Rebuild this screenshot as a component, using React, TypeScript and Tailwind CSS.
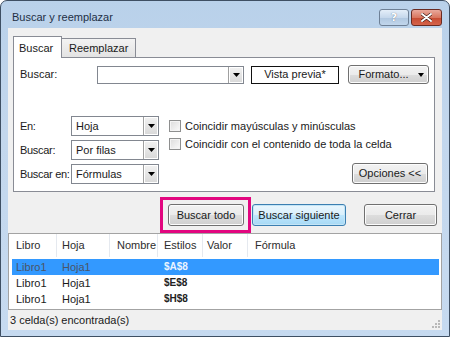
import React from "react";

const btn =
  "flex items-center justify-center rounded-[3px] border border-[#707070] bg-[linear-gradient(to_bottom,#f2f2f2_0%,#ebebeb_50%,#dddddd_51%,#cfcfcf_100%)] text-[#1a1a1a] shadow-[inset_0_0_0_1px_#fcfcfc]";

function Arrow() {
  return (
    <svg width="7" height="4" viewBox="0 0 7 4">
      <path d="M0 0h7L3.5 4z" fill="#000" />
    </svg>
  );
}

function DropBtn() {
  return (
    <div className="flex h-full w-[15px] items-center justify-center border-l border-[#a0a0a0] bg-[linear-gradient(to_bottom,#f2f2f2,#d8d8d8)] shadow-[inset_0_0_0_1px_#fff]">
      <Arrow />
    </div>
  );
}

function Select({ value }: { value: string }) {
  return (
    <div className="flex h-[20px] w-[88px] items-stretch border border-[#828790] bg-white">
      <div className="flex flex-1 items-center pl-[4px] text-[#1a1a1a]">{value}</div>
      <DropBtn />
    </div>
  );
}

function Check({ label }: { label: string }) {
  return (
    <div className="flex h-[14px] items-center">
      <div className="h-[12px] w-[12px] shrink-0 border border-[#8e8f8f] bg-[linear-gradient(135deg,#dcdcdc,#fbfbfb)] shadow-[inset_0_0_0_1px_#f4f4f4]" />
      <span className="ml-[4px] text-[#1a1a1a]">{label}</span>
    </div>
  );
}

const cols = [
  { w: "w-[48px]", pl: "pl-[7px]" },
  { w: "w-[53px]", pl: "pl-[5px]" },
  { w: "w-[48px]", pl: "pl-[7px]" },
  { w: "w-[45px]", pl: "pl-[6px]" },
  { w: "w-[45px]", pl: "pl-[4px]" },
  { w: "flex-1", pl: "pl-[7px]" },
];

const rows = [
  ["Libro1", "Hoja1", "", "$A$8", "", ""],
  ["Libro1", "Hoja1", "", "$E$8", "", ""],
  ["Libro1", "Hoja1", "", "$H$8", "", ""],
];

export default function App() {
  return (
    <div
      className="relative flex h-[337px] w-[450px] flex-col overflow-hidden whitespace-nowrap rounded-t-[7px] border border-[#3e4f63] bg-[linear-gradient(to_bottom,#b9d1ea_0%,#c3d7ed_40%,#c6daf0_100%)] text-[11px] leading-none"
      style={{ fontFamily: '"Liberation Sans", Arial, sans-serif' }}
    >
      {/* Title bar */}
      <div className="flex h-[27px] shrink-0 items-start">
        <div className="ml-[11px] mt-[11px] text-[11px] text-[#1e2f45]">Buscar y reemplazar</div>
        <div className="ml-auto mr-[7px] mt-[8px] flex gap-[2px]">
          <div className="flex h-[17px] w-[30px] items-center justify-center rounded-[3px] border border-[#6e8096] bg-[linear-gradient(to_bottom,#e4eef9_0%,#c6d8ec_50%,#b0c7e0_51%,#c1d6ec_100%)]">
            <span className="text-[11px] font-bold text-white [text-shadow:0_0_1px_#44556a]" style={{ fontFamily: '"DejaVu Sans", sans-serif' }}>?</span>
          </div>
          <div className="flex h-[17px] w-[31px] items-center justify-center rounded-[3px] border border-[#6a2b22] bg-[linear-gradient(to_bottom,#e9a99c_0%,#d9765f_50%,#c64b32_51%,#d5634a_100%)]">
            <svg width="11" height="9" viewBox="0 0 11 9">
              <path d="M1 1l9 7M10 1L1 8" stroke="#3a1510" strokeWidth="3.2" strokeLinecap="round" />
              <path d="M1 1l9 7M10 1L1 8" stroke="#fff" strokeWidth="2" strokeLinecap="round" />
            </svg>
          </div>
        </div>
      </div>

      {/* Client area */}
      <div className="ml-[7px] flex h-[302px] w-[434px] flex-col bg-[#f0f0f0]">
        {/* Tabs */}
        <div className="ml-[5px] mt-[8px] flex h-[21px] items-end">
          <div className="relative z-10 -mb-px flex h-[22px] w-[49px] items-start border border-b-0 border-[#898c95] bg-white pl-[5px] pt-[6px] text-[#1a1a1a]">
            Buscar
          </div>
          <div className="flex h-[19px] w-[74px] items-start border border-b-0 border-l-0 border-[#898c95] bg-[linear-gradient(to_bottom,#f3f3f3,#e3e3e3)] pl-[7px] pt-[4px] text-[#1a1a1a]">
            Reemplazar
          </div>
        </div>

        {/* Panel */}
        <div className="ml-[5px] flex h-[135px] w-[422px] flex-col border border-[#898c95] bg-white">
          <div className="mt-[7px] flex h-[19px] items-center pl-[6px]">
            <div className="w-[77px] text-[#1a1a1a]">Buscar:</div>
            <div className="flex h-[18px] w-[147px] items-stretch border border-[#828790] bg-white">
              <div className="flex-1" />
              <DropBtn />
            </div>
            <div className="ml-[7px] flex h-[18px] w-[88px] items-center justify-center border border-[#111] bg-white text-[#1a1a1a]">
              Vista previa*
            </div>
            <div className={`${btn} relative ml-[9px] h-[19px] w-[81px]`}>
              <span className="mr-[10px]">Formato...</span>
              <div className="absolute right-[4px] top-[7px] h-0 w-0 border-x-[3px] border-t-[4px] border-x-transparent border-t-black" />
            </div>
          </div>

          <div className="mt-[32px] flex h-[68px] pl-[6px] pr-[6px]">
            <div className="flex shrink-0 flex-col gap-[4px]">
              {[
                ["En:", "Hoja"],
                ["Buscar:", "Por filas"],
                ["Buscar en:", "Fórmulas"],
              ].map(([l, v]) => (
                <div key={l} className="flex items-center">
                  <div className="w-[51px] shrink-0 tracking-[-0.3px] text-[#1a1a1a]">{l}</div>
                  <Select value={v} />
                </div>
              ))}
            </div>
            <div className="ml-[10px] mt-[3px] flex w-[170px] shrink-0 flex-col gap-[4px]">
              <Check label="Coincidir mayúsculas y minúsculas" />
              <Check label="Coincidir con el contenido de toda la celda" />
            </div>
            <div className="ml-auto flex items-end">
              <div className={`${btn} h-[21px] w-[76px]`}>Opciones &lt;&lt;</div>
            </div>
          </div>
        </div>

        {/* Buttons row */}
        <div className="relative mt-[12px] flex h-[22px] justify-end pr-[5px]">
          <div className={`${btn} h-[22px] w-[76px]`}>Buscar todo</div>
          <div className="ml-[8px] flex h-[22px] w-[94px] items-center justify-center rounded-[3px] border border-[#3c7fb1] bg-[linear-gradient(to_bottom,#eaf6fd_0%,#d9f0fc_50%,#bee6fd_51%,#a7d9f5_100%)] text-[#1a1a1a] shadow-[inset_0_0_0_1px_#c4e5f6]">
            Buscar siguiente
          </div>
          <div className={`${btn} ml-[18px] h-[22px] w-[73px]`}>Cerrar</div>
          <div className="pointer-events-none absolute left-[152px] top-[-7px] h-[36px] w-[91px] border-[3px] border-[#e2067f]" />
        </div>

        {/* List view */}
        <div className="mt-[7px] flex h-[77px] flex-col border border-[#a3a3a3] bg-white">
          <div className="flex h-[23px] items-center text-[#2d2d2d]">
            {["Libro", "Hoja", "Nombre", "Estilos", "Valor", "Fórmula"].map((h, i) => (
              <div
                key={h}
                className={`${cols[i].w} ${cols[i].pl} flex h-full items-center ${i < 5 ? "border-r border-[#e5e9ef]" : ""}`}
              >
                {h}
              </div>
            ))}
          </div>
          <div className="mt-[2px] flex flex-col">
            {rows.map((r, ri) => (
              <div
                key={ri}
                className={`ml-[3px] mr-[2px] flex h-[16px] items-center ${ri === 0 ? "bg-[#3399ff]" : ""}`}
              >
                {r.map((c, ci) => (
                  <div
                    key={ci}
                    className={`${ci === 0 ? "w-[45px] pl-[4px]" : cols[ci].w + " " + cols[ci].pl} ${
                      ci === 3
                        ? ri === 0
                          ? "font-bold text-[10px] text-[#eaf4ff]"
                          : "font-bold text-[10px] text-[#222]"
                        : ri === 0
                        ? "text-[#4b5566]"
                        : "text-[#1a1a1a]"
                    }`}
                  >
                    {c}
                  </div>
                ))}
              </div>
            ))}
          </div>
        </div>

        {/* Status bar */}
        <div className="relative flex h-[20px] items-center pl-[2px] text-[#1a1a1a]">
          3 celda(s) encontrada(s)
          <svg className="absolute bottom-[2px] right-[2px]" width="10" height="10" viewBox="0 0 10 10">
            {[
              [8, 2],
              [5, 5],
              [8, 5],
              [2, 8],
              [5, 8],
              [8, 8],
            ].map(([x, y], i) => (
              <rect key={i} x={x} y={y} width="2" height="2" fill="#b8b8b8" />
            ))}
          </svg>
        </div>
      </div>
    </div>
  );
}
